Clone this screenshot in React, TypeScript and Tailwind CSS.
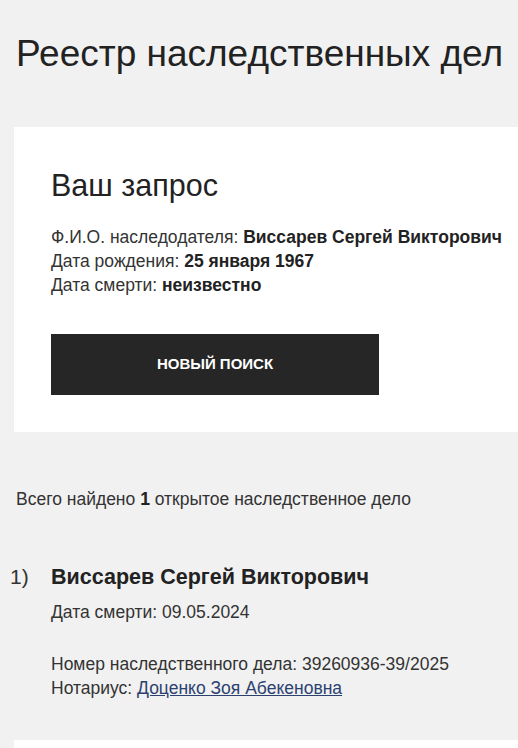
export default function App() {
  return (
    <div className="h-screen overflow-hidden bg-[#f1f1f1] text-[#222] font-['Liberation_Sans',Arial,sans-serif]">
      <h1 className="pl-4 pt-[33px] text-[37px] leading-[42px] whitespace-nowrap">Реестр наследственных дел</h1>

      {/* Query card */}
      <div className="ml-[14px] mt-[52px] bg-white pl-[37px] pt-[40px] pb-[37px]">
        <h2 className="text-[30.5px] leading-[36px]">Ваш запрос</h2>
        <div className="mt-[22px] text-[17.5px] leading-[24px] text-[#333] whitespace-nowrap">
          <p>
            Ф.И.О. наследодателя: <b className="text-[#222]">Виссарев Сергей Викторович</b>
          </p>
          <p>
            Дата рождения: <b className="text-[#222]">25 января 1967</b>
          </p>
          <p>
            Дата смерти: <b className="text-[#222]">неизвестно</b>
          </p>
        </div>
        <button className="mt-[37px] flex h-[61px] w-[328px] items-center justify-center bg-[#262626] text-[15px] font-bold uppercase text-white">
          Новый поиск
        </button>
      </div>

      <p className="mt-[55px] pl-4 text-[17.5px] leading-[24px] text-[#333] whitespace-nowrap">
        Всего найдено <b className="text-[#222]">1</b> открытое наследственное дело
      </p>

      {/* Result */}
      <div className="mt-[53px] flex">
        <span className="w-[51px] pl-[10px] text-[21px] leading-[26px] text-[#333]">1)</span>
        <div>
          <h3 className="text-[21.5px] leading-[26px] font-bold whitespace-nowrap">Виссарев Сергей Викторович</h3>
          <p className="mt-[10px] text-[17.5px] leading-[24px] text-[#333]">Дата смерти: 09.05.2024</p>
          <p className="mt-[28px] text-[17.5px] leading-[24px] text-[#333] whitespace-nowrap">Номер наследственного дела: 39260936-39/2025</p>
          <p className="text-[17.5px] leading-[24px] text-[#333]">
            Нотариус: <a href="#" className="text-[#2c4170] underline">Доценко Зоя Абекеновна</a>
          </p>
        </div>
      </div>

      <div className="ml-[14px] mt-[40px] h-[200px] bg-white"></div>
    </div>
  );
}
